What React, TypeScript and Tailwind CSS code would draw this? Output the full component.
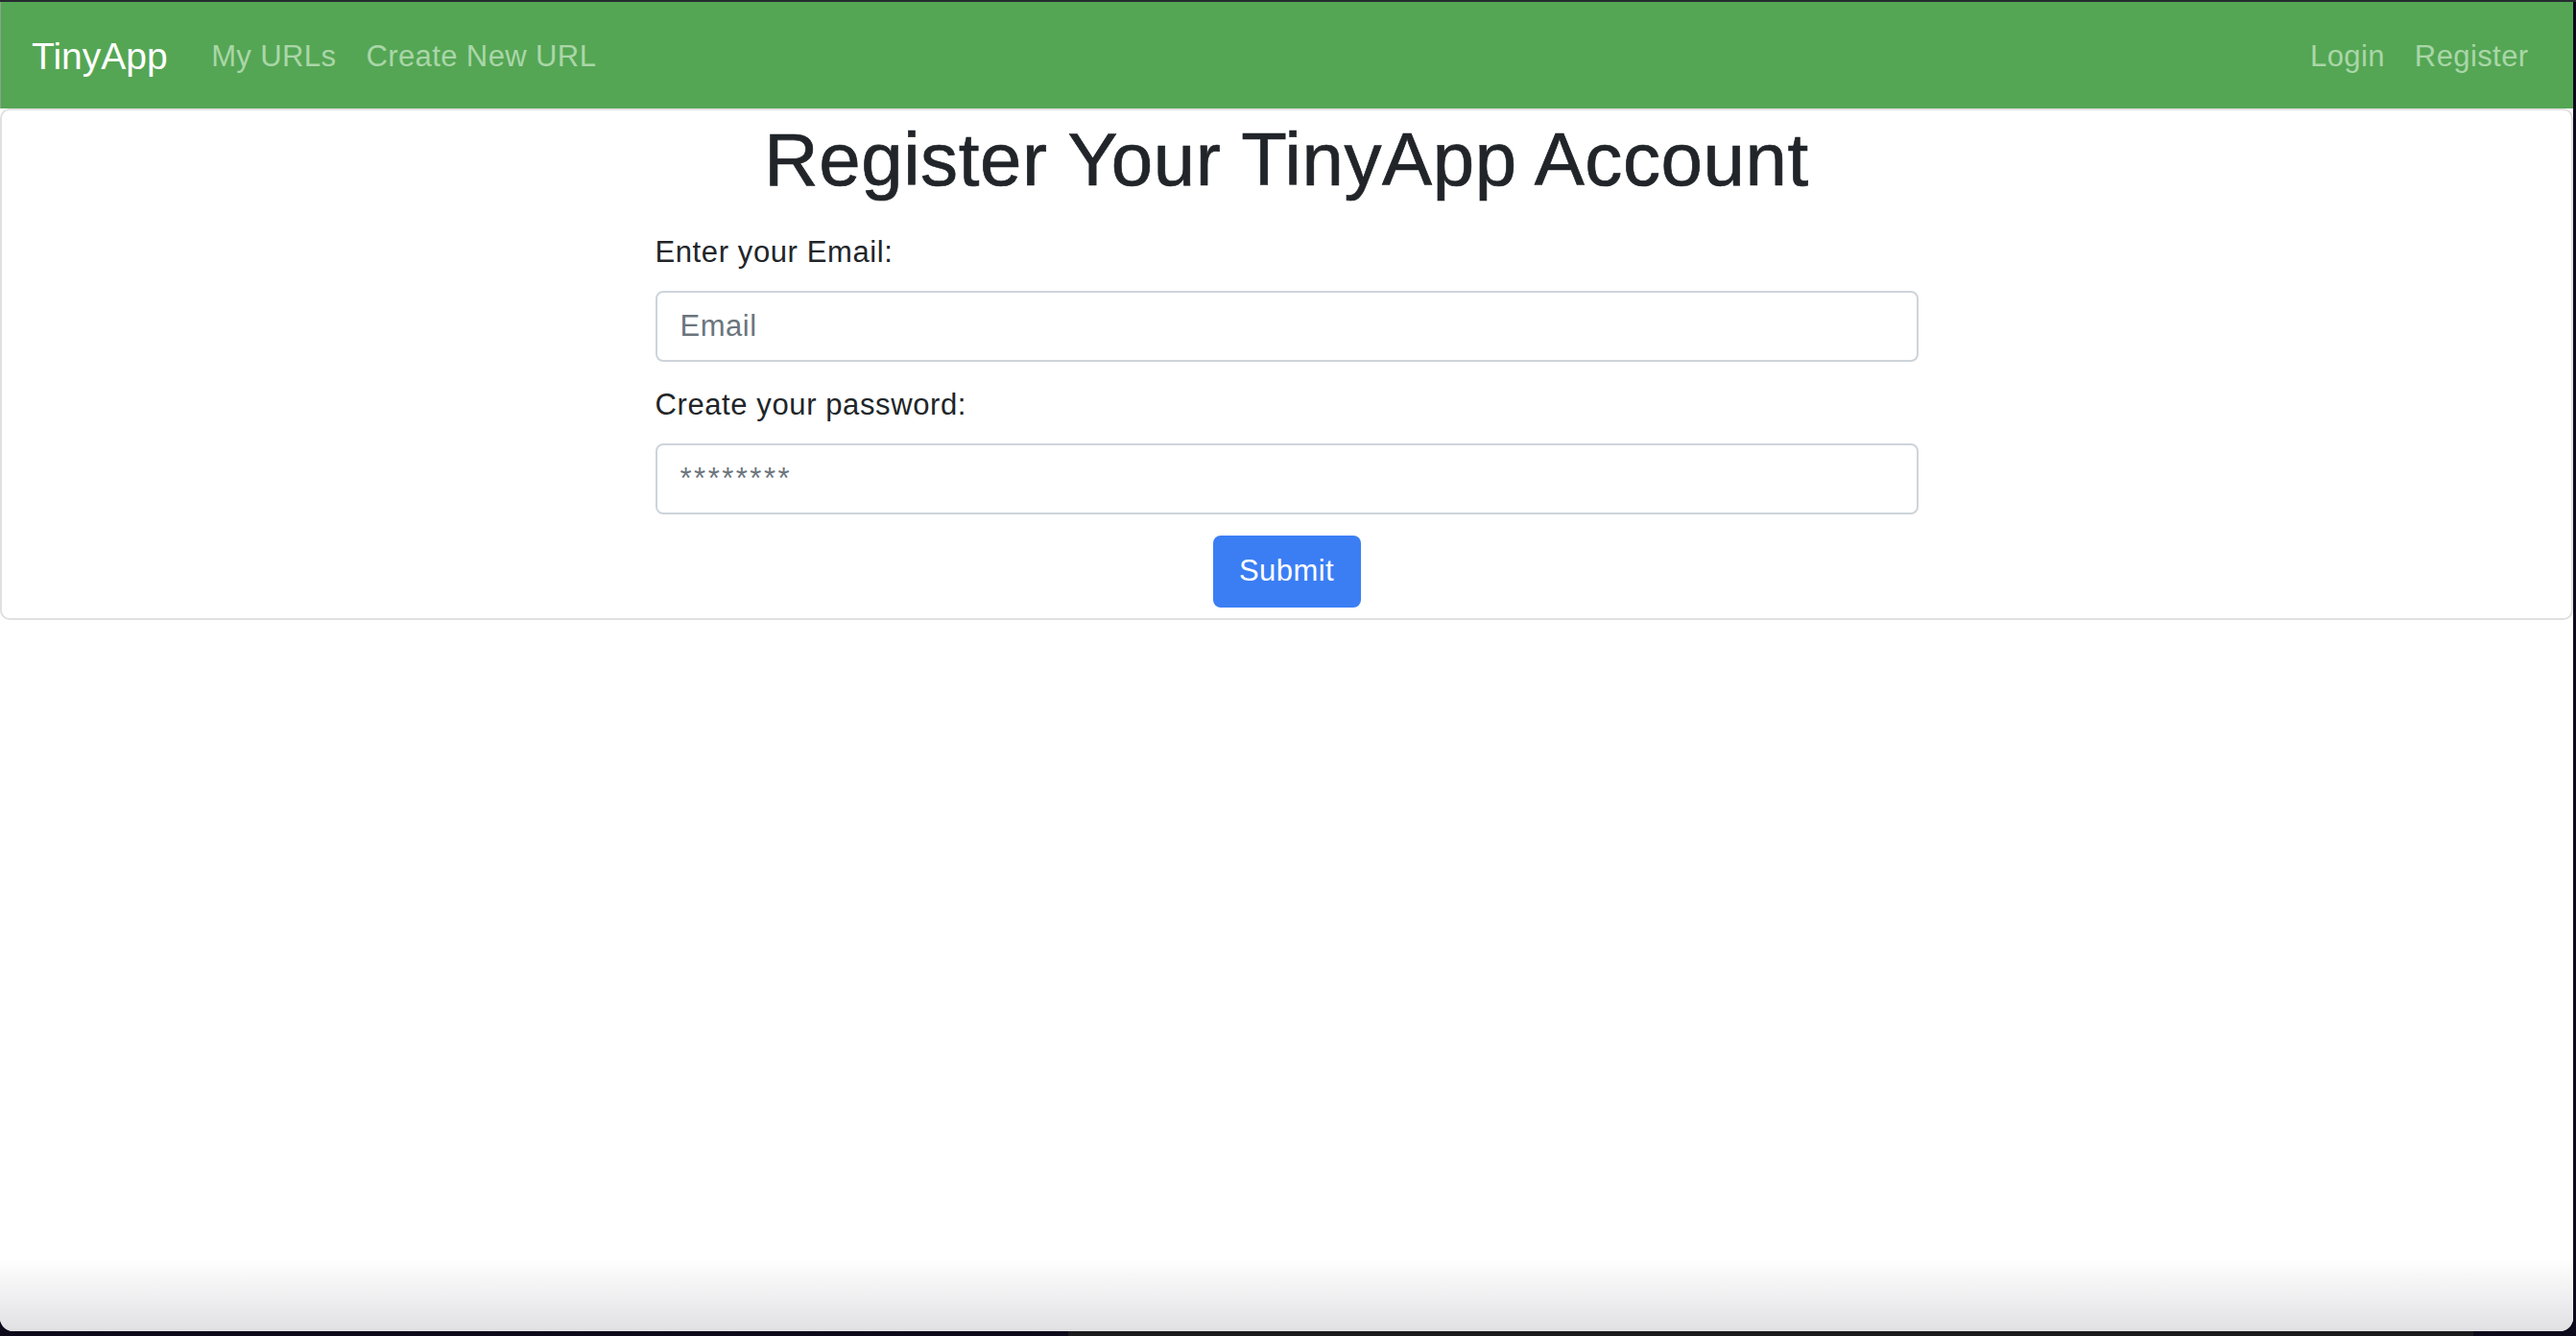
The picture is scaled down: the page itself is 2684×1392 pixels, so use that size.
import React, { useState } from 'react'

export default function App() {
  const [email, setEmail] = useState('')
  const [password, setPassword] = useState('')

  return (
    <div className="w-[2684px] h-[1392px] bg-[#0d0a1c] overflow-hidden [font-family:'Liberation_Sans',Arial,sans-serif]">
      {/* window top edge */}
      <div className="h-[2px] bg-[#262b30]" />

      <div className="relative mr-[3px] h-[1385px] bg-white rounded-b-[14px] overflow-hidden flex flex-col">
        {/* Navbar */}
        <nav className="h-[111px] bg-[#54a654] flex items-center pt-[3px] pl-[32px] pr-[31px] border-l border-[#8fa08f] tracking-[0.4px]">
          <a href="#" className="text-[39px] text-white mr-[30px] tracking-normal">TinyApp</a>
          <a href="#" className="px-[15.5px] text-[31px] text-[#aad6a8]">My URLs</a>
          <a href="#" className="px-[15.5px] text-[31px] text-[#aad6a8]">Create New URL</a>
          <div className="ml-auto flex items-center">
            <a href="#" className="px-[15.5px] text-[31px] text-[#aad6a8]">Login</a>
            <a href="#" className="px-[15.5px] text-[31px] text-[#aad6a8]">Register</a>
          </div>
        </nav>

        {/* Register card */}
        <div className="border-2 border-[#e0e0e0] rounded-[10px] flex flex-col items-center pb-[11px]">
          <h1 className="mt-[4px] text-[78px] leading-[94px] text-[#212529] tracking-[0.6px] [-webkit-text-stroke:0.7px_#212529]">
            Register Your TinyApp Account
          </h1>
          <form className="w-[1316px] flex flex-col" onSubmit={(e) => e.preventDefault()}>
            <label className="mt-[26px] text-[31px] leading-[47px] text-[#212529] tracking-[0.6px]">Enter your Email:</label>
            <input
              type="email"
              value={email}
              onChange={(e) => setEmail(e.target.value)}
              placeholder="Email"
              className="mt-[17px] block w-full h-[74px] border-2 border-[#ced4da] rounded-[8px] px-[24px] text-[31px] tracking-[0.5px] text-[#495057] placeholder:text-[#6c757d] outline-none"
            />
            <label className="mt-[21px] text-[31px] leading-[47px] text-[#212529] tracking-[0.6px]">Create your password:</label>
            <input
              type="password"
              value={password}
              onChange={(e) => setPassword(e.target.value)}
              placeholder="********"
              className="mt-[17px] block w-full h-[74px] border-2 border-[#ced4da] rounded-[8px] px-[24px] text-[31px] tracking-[2.5px] text-[#495057] placeholder:text-[#6c757d] outline-none"
            />
            <button
              type="submit"
              className="mt-[22px] mx-auto w-[154px] h-[75px] rounded-[8px] bg-[#3b7ef4] text-white text-[31px] tracking-[0.4px]"
            >
              Submit
            </button>
          </form>
        </div>

        {/* window bottom fade */}
        <div className="absolute inset-x-0 bottom-0 h-[76px] bg-linear-to-b from-white to-[#e1e1e4]" />
      </div>

      {/* bottom edge */}
      <div className="flex h-[5px]">
        <div className="w-[1113px]" />
        <div className="w-[1464px] bg-[#1b1b1d]" />
      </div>
    </div>
  )
}
